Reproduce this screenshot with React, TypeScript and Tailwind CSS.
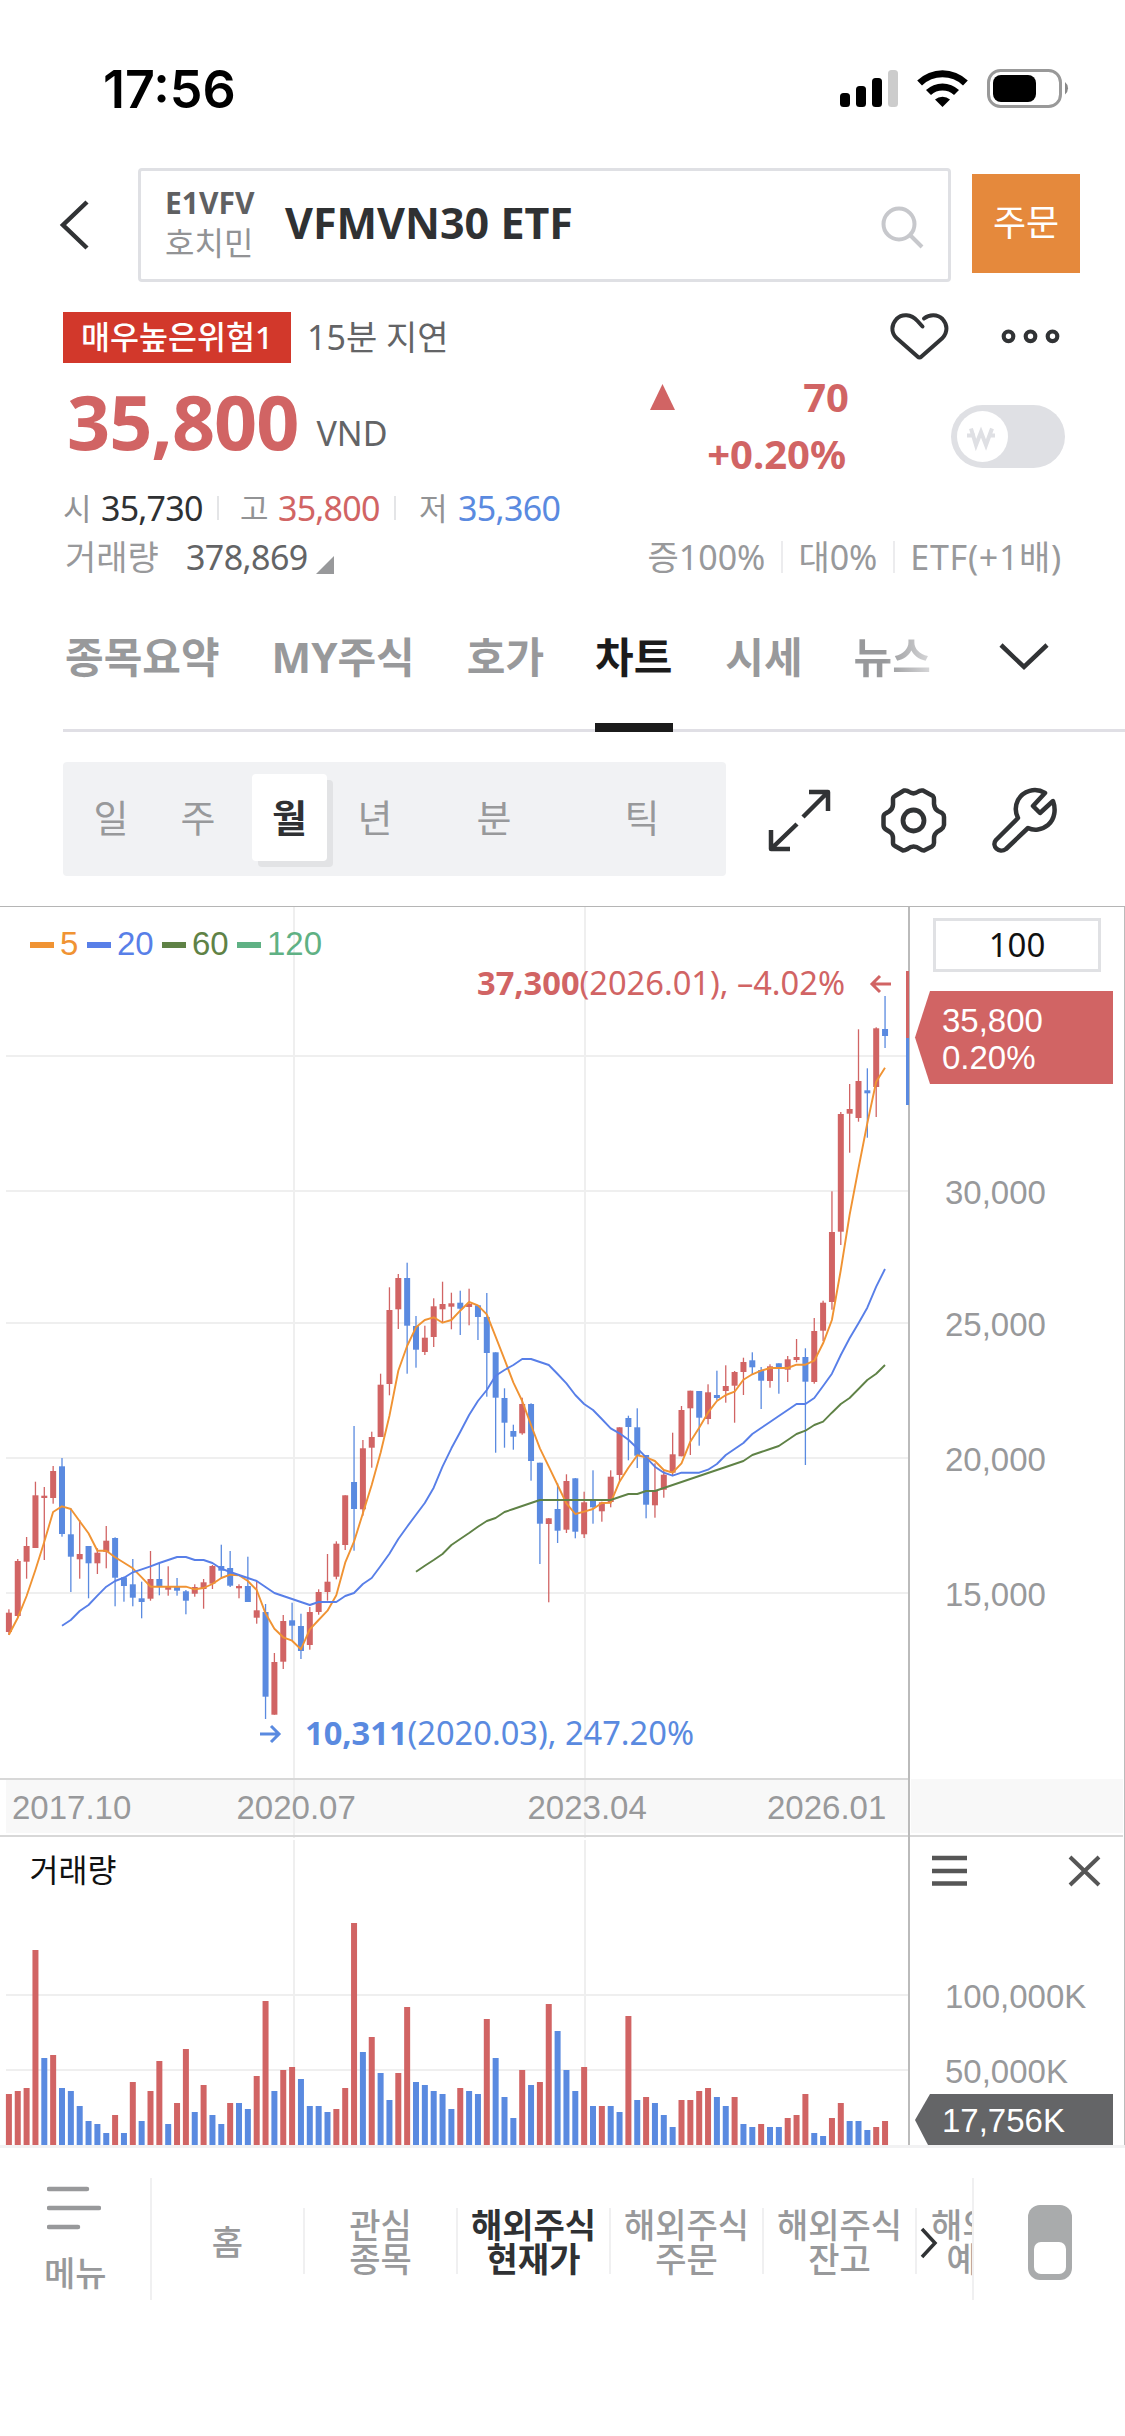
import React, { useState } from 'react';

const UP = '#d16464';
const DOWN = '#5a8ae0';
const CHART_FONT = '"Liberation Sans", Arial, sans-serif';
const TEXT_FONT = '"Noto Sans", "Noto Sans CJK KR", sans-serif';

// [direction, high, body top, body bottom, low, volume]
type Candle = [string, number, number, number, number, number];

const CANDLES: Candle[] = [
  ['u', 702.3, 705.7, 725, 728, 51], ['u', 652, 654, 709, 711, 54],
  ['u', 630, 639, 654.7, 671.7, 57], ['u', 574.7, 588.3, 641, 641, 195],
  ['u', 580, 588.7, 591, 653, 87], ['u', 559, 564, 591, 596.7, 90],
  ['d', 551, 559.3, 627, 629.7, 57], ['d', 601.3, 627.3, 649.7, 685, 54],
  ['u', 613, 647, 652.3, 671.7, 39], ['d', 639, 639, 656.3, 691.3, 24],
  ['u', 641.3, 645.7, 656.3, 667, 21], ['u', 619, 633.7, 645, 661.3, 12],
  ['d', 630.3, 631, 670.7, 699.3, 30], ['d', 669.7, 670.3, 679, 694.7, 12],
  ['d', 652, 677.3, 690.7, 699.3, 63], ['d', 674.7, 691.3, 695, 711.3, 24],
  ['u', 644, 672, 691.7, 693.7, 54], ['d', 656, 672, 679.7, 688.3, 84],
  ['u', 659.3, 679.7, 682.7, 688.7, 21], ['d', 671, 679.7, 683.7, 688.7, 42],
  ['d', 683, 684.3, 693.7, 707.3, 96], ['u', 677.3, 680, 686.7, 689.7, 33],
  ['u', 672, 675.3, 682, 701.7, 60], ['u', 658, 659, 676.7, 682, 30],
  ['d', 637.7, 659, 663.7, 671.7, 21], ['d', 644, 661, 678.7, 680, 42],
  ['u', 677.3, 679, 681.3, 691.3, 42], ['d', 649.7, 679, 695, 695, 36],
  ['u', 674, 703.3, 710.7, 716.7, 69], ['d', 697, 705, 789.7, 812, 144],
  ['u', 746, 755, 807.7, 807.7, 54], ['u', 708, 714, 754.7, 762, 75],
  ['d', 695.7, 713.3, 718.7, 733, 78], ['d', 706.7, 719, 744, 752, 66],
  ['u', 700, 705, 738, 742.7, 39], ['u', 682.3, 685, 705, 707.7, 39],
  ['u', 647, 674.7, 685, 693.7, 33], ['u', 634.3, 636.7, 669.7, 672.3, 36],
  ['u', 588.3, 588.3, 638, 643, 57], ['d', 519, 575, 602, 643.7, 222],
  ['u', 533, 541.3, 602.3, 608.7, 93], ['u', 524.7, 530, 540.7, 560.7, 108],
  ['u', 466.7, 477.7, 530, 530, 72], ['u', 380.3, 403, 477, 488.3, 45],
  ['u', 367, 371, 402.3, 422, 72], ['d', 355.7, 371, 418.7, 466.7, 138],
  ['d', 409, 419, 442.7, 460.7, 63], ['u', 418.7, 430.7, 445, 448, 60],
  ['u', 391.3, 399.3, 430, 440, 54], ['u', 374.7, 397, 402.3, 415.7, 51],
  ['u', 385.7, 396.3, 399.7, 422.3, 36], ['d', 383.7, 395.7, 401.7, 428, 57],
  ['u', 381.7, 397, 400, 418.3, 54], ['d', 398.3, 398.3, 410, 433, 51],
  ['d', 386, 410, 446, 489.7, 126], ['d', 445.3, 445.3, 490.7, 545.7, 87],
  ['d', 481.3, 491, 515.7, 540.7, 48], ['d', 517.7, 524, 529.7, 542.7, 27],
  ['u', 490.7, 497, 526.3, 527.7, 75], ['d', 496.3, 497, 554, 573.7, 60],
  ['d', 555.7, 555.7, 616.7, 657, 63], ['u', 611, 611.3, 617, 695.3, 141],
  ['d', 576.3, 602, 623.7, 636, 114], ['u', 567.3, 574, 622.7, 626, 75],
  ['d', 571, 571.3, 624.7, 631.3, 54], ['u', 584.7, 595.3, 627.3, 631, 78],
  ['d', 563.3, 593, 600.3, 616.7, 39], ['u', 594.7, 595.3, 604.3, 614.7, 39],
  ['u', 563.3, 569.7, 595, 600.3, 39], ['u', 520.3, 520.3, 568, 574.7, 33],
  ['d', 508.7, 511, 520, 553.3, 129], ['d', 501.3, 520.3, 548.7, 561, 45],
  ['d', 548, 548, 597.7, 611.3, 48], ['u', 556.3, 583, 598.3, 610.7, 42],
  ['u', 563, 567.7, 582.7, 590.7, 30], ['u', 525.7, 547.3, 565.7, 568, 18],
  ['u', 499, 503, 549.3, 549.3, 45], ['u', 483.7, 483.7, 501.3, 548, 45],
  ['d', 484, 484, 510.7, 538.7, 54], ['u', 477.3, 485.3, 512, 517.3, 57],
  ['d', 463.7, 488, 491, 493, 48], ['u', 458.3, 479, 484, 495.7, 39],
  ['u', 464, 465, 478.7, 515.7, 48], ['u', 450.7, 455, 465, 488, 21],
  ['d', 445.3, 453.3, 460.3, 468, 18], ['d', 460, 463, 473.7, 502, 21],
  ['u', 457.3, 459.3, 474, 480.7, 18], ['d', 456.3, 456.3, 461.7, 486.7, 18],
  ['u', 449, 452.3, 462.7, 475, 27], ['u', 432, 450, 453, 455.3, 30],
  ['d', 441.3, 450, 474.7, 558, 51], ['u', 411, 424, 475, 476.7, 12],
  ['u', 393.7, 395.7, 423.7, 434, 9], ['u', 284.3, 325, 395, 402.7, 27],
  ['u', 205, 207, 324.7, 338, 42], ['u', 177, 202, 206.7, 245.7, 24],
  ['u', 122.3, 174, 211, 214.7, 24], ['d', 161.3, 183.3, 186.3, 230.7, 15],
  ['u', 120.3, 121.3, 180, 210, 18], ['d', 89, 122, 129, 141, 24],
];

// Direction of each volume bar against the previous month, one row per ten bars
const VOLUME_DIRS = [
  'uuuududddd',
  'ddududuudu',
  'ududdudduu',
  'duudddduuu',
  'dudduudddd',
  'duddudddud',
  'uudddududd',
  'ududdduuuu',
  'dduddudduu',
  'udduudddu' + 'u',
].join('');

const MA5 = [
  727.7, 710.7, 689, 663, 634.7, 605, 599.3, 602, 614.3, 626.3, 643.7, 643.7, 650.3, 655.7, 661.3, 670.3, 679.7,
  679.7, 679.7, 679.7, 679.7, 682.3, 681, 677, 671, 667.7, 668.3, 674, 683, 706.3, 721.7, 730.3, 733.7, 742.3,
  722.3, 713, 703.7, 688.3, 655.7, 634.7, 606.3, 578, 545.7, 509, 463.7, 439, 420.3, 413, 410.3, 415.7, 413,
  403.7, 395, 398.3, 407.3, 429.7, 452.3, 475.7, 494, 518, 541.3, 559.7, 578, 596.3, 607, 604.7, 602, 596,
  595.7, 574.7, 560.7, 548.3, 550.3, 554, 563, 565.7, 556.3, 534.7, 520.7, 505.7, 494, 488, 484.7, 472.7,
  467.3, 463.7, 461, 461, 461, 457.7, 457.7, 453.7, 436.3, 413, 363, 308, 261.3, 216.3, 174.7, 160.7,
];

const MA20 = [
  718.7, 713, 704, 698, 688.7, 679.7, 674, 670.7, 665.3, 662.3, 659.3, 656, 653, 650, 650, 653, 653, 656, 661.7,
  665, 668, 671, 674, 680, 686, 689, 692, 695, 698, 695, 695, 695, 689, 686, 677, 671, 659, 646.7, 632, 619.7,
  607.7, 596, 580.7, 559.7, 541.3, 525, 508, 494, 483, 468.7, 463, 458, 452, 452, 455, 458, 467, 476.3, 488,
  497, 503, 512, 521.3, 526.3, 532.7, 541.3, 550.3, 559.7, 565.7, 568.7, 565.7, 565.7, 565.7, 562.7, 557, 548,
  542, 536, 527, 521, 515, 509, 503, 497, 497, 491, 479, 466.7, 448, 431.3, 416.3, 400.7, 379.7, 362,
];

const MA60 = [
  664.7, 658.7, 653, 647, 638, 632, 626, 619.7, 614, 611, 605, 602, 599, 596, 593, 593, 593, 593, 593, 593, 593,
  593, 593, 590, 587, 587, 584, 584, 581, 578, 575, 572, 569, 566, 563, 560, 557, 554, 548, 545, 542, 539, 533,
  527, 523.7, 518, 514.7, 505.7, 497, 491, 482, 473, 466.7, 458,
];

const TABS = [
  { label: '종목요약', left: 'ml-[2px]' },
  { label: 'MY주식', left: 'ml-[52px]' },
  { label: '호가', left: 'ml-[52px]' },
  { label: '차트', left: 'ml-[51px]' },
  { label: '시세', left: 'ml-[53px]' },
  { label: '뉴스', left: 'ml-[51px]' },
];

const PERIODS = [
  { label: '일', width: 'w-[96px]' },
  { label: '주', width: 'w-[78px]' },
  { label: '월', width: 'w-[75px]' },
  { label: '년', width: 'w-[96px]' },
  { label: '분', width: 'w-[142px]' },
  { label: '틱', width: 'w-[154px]' },
];

const NAV_ITEMS = ['홈', '관심\n종목', '해외주식\n현재가', '해외주식\n주문', '해외주식\n잔고', '해외주식\n예수금'];

const candleX = (i: number) => 8.9 + i * 8.85;

const toPoints = (values: number[]) => {
  const start = CANDLES.length - values.length;
  return values.map((v, i) => `${candleX(start + i).toFixed(1)},${v}`).join(' ');
};

const StatusBar = () => (
  <div className="flex h-[168px] items-start justify-between pl-[103px] pr-[56px]">
    <span className="mt-[59px] font-[Inter] text-[52px] leading-[62px] font-semibold text-black">17:56</span>
    <svg className="mt-[66px]" width="232" height="46" viewBox="837 66 232 46">
      <rect x="840" y="93" width="10" height="14" rx="3.5" />
      <rect x="856" y="86" width="10" height="21" rx="3.5" />
      <rect x="872" y="78" width="10" height="29" rx="3.5" />
      <rect x="888" y="70" width="10" height="37" rx="3.5" fill="#ccc" />
      <path d="M917.2 80.5 A36.5 36.5 0 0 1 967.8 80.5 L963 85.5 A29.5 29.5 0 0 0 922 85.5 Z" />
      <path d="M926 90 A24 24 0 0 1 959 90 L954 95 A17 17 0 0 0 931 95 Z" />
      <path d="M935 99.5 A11.5 11.5 0 0 1 950 99.5 L942.5 107 Z" />
      <rect x="988.5" y="70.5" width="72" height="36" rx="12" fill="none" stroke="#999" strokeWidth="3" />
      <rect x="993" y="75" width="43" height="27" rx="8" />
      <path d="M1065 82 A8 8 0 0 1 1065 94.5 Z" fill="#888" />
    </svg>
  </div>
);

const SearchHeader = () => (
  <header className="flex h-[114px] items-center">
    <svg className="ml-[58px]" width="34" height="56" viewBox="0 0 34 56" fill="none" stroke="#313335" strokeWidth="4.5">
      <path d="M29 5 L5 28 L29 51" />
    </svg>
    <div className="ml-[46px] flex h-[114px] w-[813px] items-center rounded-[4px] border-[3px] border-[#dfe0e4] pl-[24px] pr-[24px]">
      <div className="mb-[4px] flex w-[120px] flex-col">
        <span className="text-[30px] leading-[40px] font-bold text-[#5f6062]">E1VFV</span>
        <span className="text-[32px] leading-[40px] text-[#929395]">호치민</span>
      </div>
      <span className="mb-[4px] flex-1 text-[43px] leading-[60px] font-bold text-[#2f3133]">VFMVN30 ETF</span>
      <svg className="mt-1" width="44" height="44" viewBox="0 0 44 44" fill="none" stroke="#c7c8cc" strokeWidth="4">
        <circle cx="19" cy="19" r="15.5" />
        <path d="M30 30 L42 42" />
      </svg>
    </div>
    <button className="mb-[3px] ml-[21px] h-[99px] w-[108px] bg-[#e5893c] pb-[2px] text-[36px] text-white">주문</button>
  </header>
);

const QuoteSummary = () => (
  <section className="h-[317px]">
    <div className="flex h-[111px] items-center pl-[63px]">
      <span className="flex h-[51px] w-[228px] items-center justify-center bg-[#d2382b] pb-px text-[31.5px] font-medium text-white">
        매우높은위험1
      </span>
      <span className="ml-[16px] text-[34px] text-[#636466]">15분 지연</span>
      <svg className="mb-px ml-auto mr-[55px]" width="182" height="54" viewBox="888 310 182 54" fill="none" stroke="#313335">
        <path
          d="M922.5 326.5 L917.5 321 C911 314 902 313.5 896.5 319 C891.5 324.5 890.5 332 896.5 338 L917.5 356.5 Q919.5 358.5 921.5 356.5 L942.5 338 C948 332 947.5 324.5 942.5 319 C937.5 314 929.5 314 924 318.5"
          strokeWidth="4"
          strokeLinecap="round"
          strokeLinejoin="round"
        />
        <circle cx="1008.5" cy="336.3" r="4.8" strokeWidth="4.2" />
        <circle cx="1030.5" cy="336.3" r="4.8" strokeWidth="4.2" />
        <circle cx="1052.5" cy="336.3" r="4.8" strokeWidth="4.2" />
      </svg>
    </div>
    <div className="flex h-[90px] pl-[67px] pr-[60px]">
      <span className="-mt-[8px] text-[75.5px] leading-[72px] font-bold tracking-[-1px] text-[#d16464]">35,800</span>
      <span className="mt-[18px] ml-[18px] text-[34px] leading-[44px] text-[#636466]">VND</span>
      <div className="-mt-[25px] ml-auto flex w-[199px] flex-col text-[40px] leading-[57px] font-bold text-[#d16464]">
        <div className="flex items-center justify-between">
          <svg width="25" height="26" viewBox="0 0 25 26" fill="currentColor">
            <path d="M12.5 0 L25 26 H0 Z" />
          </svg>
          <span>70</span>
        </div>
        <span className="mr-[3px] self-end">+0.20%</span>
      </div>
      <svg className="mt-[11px] ml-[102px]" width="114" height="65" viewBox="0 0 114 65">
        <rect y="1" width="114" height="63" rx="31.5" fill="#dfe0e4" />
        <circle cx="31.5" cy="32.5" r="25.5" fill="#fff" />
        <path d="M20 24.5 L25 41 L30 28 L35 41 L41 24.5 M16 31.5 H24 M37 31.5 H44" fill="none" stroke="#dfe0e4" strokeWidth="4" />
      </svg>
    </div>
    <div className="flex h-[50px] items-center pl-[63px] text-[34px]">
      <span className="w-[38px] text-[31px] text-[#929395]">시</span>
      <span className="w-[116px] tracking-[-0.8px] text-[#2f3133]">35,730</span>
      <span className="h-[24px] w-[2px] bg-[#e4e5e7]" />
      <span className="ml-[21px] w-[38px] text-[31px] text-[#929395]">고</span>
      <span className="w-[116px] tracking-[-0.8px] text-[#d16464]">35,800</span>
      <span className="h-[24px] w-[2px] bg-[#e4e5e7]" />
      <span className="ml-[23px] w-[39px] text-[31px] text-[#929395]">저</span>
      <span className="tracking-[-0.7px] text-[#5a8ae0]">35,360</span>
    </div>
    <div className="flex h-[48px] items-center pl-[65px] pr-[63px] text-[34px] text-[#98999b]">
      <span className="w-[121px]">거래량</span>
      <span className="tracking-[-0.6px] text-[#636466]">378,869</span>
      <svg className="mt-4 ml-[8px]" width="18" height="18" viewBox="0 0 18 18" fill="#98999b">
        <path d="M18 0 V18 H0 Z" />
      </svg>
      <div className="ml-auto flex items-center gap-[15.5px]">
        <span>증100%</span>
        <span className="h-[32px] w-[2px] bg-[#ececee]" />
        <span>대0%</span>
        <span className="h-[32px] w-[2px] bg-[#ececee]" />
        <span className="tracking-[0.7px]">ETF(+1배)</span>
      </div>
    </div>
  </section>
);

const TabBar: React.FC<{ active: string; onChange: (tab: string) => void }> = ({ active, onChange }) => (
  <nav className="ml-[63px] flex h-[133px] border-b-[3px] border-[#e0dfe5]">
    {TABS.map(({ label, left }) => (
      <button
        key={label}
        onClick={() => onChange(label)}
        className={`${left} relative flex shrink-0 pt-[26px] text-[42px] leading-[64px] font-bold whitespace-nowrap ${active === label ? 'text-[#1b1b1b]' : 'text-[#98999b]'}`}
      >
        {label === '뉴스' ? (
          <span className="bg-linear-to-r from-[#98999b] from-40% to-[#d8d8da] bg-clip-text text-transparent">{label}</span>
        ) : (
          label
        )}
        {active === label && <span className="absolute -bottom-[3px] left-0 h-[9px] w-[78px] bg-[#1b1b1b]" />}
      </button>
    ))}
    <svg className="mt-[39px] mr-[75px] ml-auto" width="52" height="34" viewBox="0 0 52 34" fill="none" stroke="#313335" strokeWidth="4.5">
      <path d="M3 7 L26 29 L49 7" />
    </svg>
  </nav>
);

const Toolbar: React.FC<{ period: string; onChange: (period: string) => void }> = ({ period, onChange }) => (
  <div className="flex h-[174px] items-start pt-[30px] pl-[63px]">
    <div className="flex h-[114px] w-[663px] items-center rounded-[4px] bg-[#f1f2f4]">
      {PERIODS.map(({ label, width }) => (
        <button
          key={label}
          onClick={() => onChange(label)}
          className={`${width} flex h-[87px] shrink-0 items-center justify-center text-[38px] ${
            period === label
              ? '-mt-[3px] ml-[15px] rounded-[4px] bg-white font-bold text-[#2f3133] shadow-[6px_6px_0_#e2e3e5]'
              : 'pb-1 text-[#98999b]'
          }`}
        >
          {label}
        </button>
      ))}
    </div>
    <svg className="ml-[39px]" width="300" height="114" viewBox="765 762 300 114" fill="none" stroke="#313335" strokeWidth="4.5" strokeLinejoin="round">
      <path d="M803 817 L828 792 M809 792 H828 V811 M797 824 L771 849 M771 830 V849 H790" />
      <path d="M904 790.5 Q907 790 909 791.7 Q913.5 795 918 791.7 Q920 790 923 790.5 L933 796 Q934 797 934 800 V804 Q934.5 809 938 811 L942 813 Q944 814.5 944 817 V825 Q943.5 828 941 829.5 L937 832 Q934 834.5 934 838 V843 Q934 845 932 846.5 L924 850.5 Q922 850.5 920 849 Q913.5 844 907.500 849 Q905 850.5 903 850.5 L895 846 Q893 845 893 843 V838 Q893 834 890 832 L886 829.5 Q883.5 828 883.5 825 V817 Q883.5 814.5 885.5 813.5 L889 811.5 Q893 809 893 804.5 V799 Q893 797 895 796 Z" />
      <circle cx="913.5" cy="820.5" r="10.5" strokeWidth="4.8" />
      <path d="M1045 793 C1035 787 1023 791 1018 800 C1015 806 1015 812 1018 818 L996 840 C991 846 999 854 1006 849 L1028 828 C1034 831 1042 830 1048 825 C1055 819 1056 809 1053 801 L1040 813 L1033 806 Z" />
    </svg>
  </div>
);

const LEGEND = [
  { period: '5', color: '#f09333', dash: 30, text: 60 },
  { period: '20', color: '#587fe8', dash: 87, text: 117 },
  { period: '60', color: '#5f8246', dash: 162, text: 192 },
  { period: '120', color: '#5fb184', dash: 237, text: 267 },
];

const PriceChart = () => (
  <svg className="block" width="1125" height="933" viewBox="0 0 1125 933" fontFamily={CHART_FONT} fontSize="33">
    <path d="M294 0 V931 M585 0 V931" stroke="#efefef" strokeWidth="2" />
    {[149, 284, 416, 551, 686].map((y) => (
      <rect key={y} x="6" y={y - 1} width="902" height="2" fill="#efefef" />
    ))}
    {/* Date band */}
    <rect x="6" y="872" width="902" height="54" fill="#f8f8f8" />
    <rect x="911" y="872" width="212" height="54" fill="#f8f8f8" />
    <path d="M294 872 V926 M585 872 V926" stroke="#efefef" strokeWidth="2" />
    <path d="M0 872 H908 M0 929 H1123" stroke="#d8d8d8" strokeWidth="2" />
    <g fill="#98999b">
      <text x="12" y="912">2017.10</text>
      <text x="236.5" y="912">2020.07</text>
      <text x="527.5" y="912">2023.04</text>
      <text x="767" y="912">2026.01</text>
    </g>

    {CANDLES.map(([dir, high, top, bottom, low], i) => {
      const color = dir === 'u' ? UP : DOWN;
      return (
        <g key={i} fill={color}>
          <rect x={candleX(i) - 0.65} y={high} width="1.3" height={low - high} />
          <rect x={candleX(i) - 3} y={top} width="6" height={bottom - top} />
        </g>
      );
    })}
    <g fill="none" strokeWidth="1.9" strokeLinejoin="round">
      <polyline points={toPoints(MA5)} stroke="#f09333" />
      <polyline points={toPoints(MA60)} stroke="#5f8246" />
      <polyline points={toPoints(MA20)} stroke="#587fe8" />
    </g>

    {LEGEND.map(({ period, color, dash, text }) => (
      <g key={period} fill={color}>
        <rect x={dash} y="35" width="24" height="6" />
        <text x={text} y="48">{period}</text>
      </g>
    ))}

    {/* Highest and lowest price notes */}
    <g fontFamily={TEXT_FONT} fontSize="33">
      <text x="845" y="87.5" textAnchor="end" fill={UP} textLength="368" lengthAdjust="spacingAndGlyphs">
        <tspan fontWeight="700">37,300</tspan>(2026.01), –4.02%
      </text>
      <path d="M891 77 H872 M880 69 L872 77 L880 85" fill="none" stroke={UP} strokeWidth="3" />
      <text x="305" y="838" fill={DOWN} textLength="389" lengthAdjust="spacingAndGlyphs">
        <tspan fontWeight="700">10,311</tspan>(2020.03), 247.20%
      </text>
      <path d="M260 827 H279 M271 819 L279 827 L271 835" fill="none" stroke={DOWN} strokeWidth="3" />
    </g>

    <rect x="908" y="0" width="2" height="933" fill="#bbb" />
    <rect x="1124" y="0" width="1" height="933" fill="#bbb" />
    <rect x="906" y="64" width="3" height="67" fill={UP} />
    <rect x="906" y="131" width="3" height="67" fill={DOWN} />

    {/* Price axis */}
    <rect x="934.5" y="12.5" width="165" height="51" fill="#fff" stroke="#e0e1e4" strokeWidth="3" />
    <text x="1017" y="50" textAnchor="middle" fontFamily={TEXT_FONT} fill="#111">100</text>
    <path d="M915 130.5 L930 84 H1113 V177 H930 Z" fill={UP} />
    <g fill="#fff">
      <text x="942" y="125">35,800</text>
      <text x="942" y="162">0.20%</text>
    </g>
    <g fill="#98999b">
      <text x="945" y="297">30,000</text>
      <text x="945" y="429">25,000</text>
      <text x="945" y="564">20,000</text>
      <text x="945" y="699">15,000</text>
    </g>
  </svg>
);

const VolumeChart = () => (
  <svg className="block" width="1125" height="305" viewBox="0 0 1125 305" fontFamily={CHART_FONT} fontSize="33">
    <path d="M294 0 V305 M585 0 V305 M6 155 H908 M6 230 H908" stroke="#efefef" strokeWidth="2" />
    <text x="29.5" y="42" fontFamily={TEXT_FONT} fontSize="31.5" fill="#111">거래량</text>
    {CANDLES.map((candle, i) => (
      <rect
        key={i}
        x={candleX(i) - 3}
        y={305 - candle[5]}
        width="6"
        height={candle[5]}
        fill={VOLUME_DIRS[i] === 'u' ? UP : DOWN}
      />
    ))}
    <rect x="908" y="0" width="2" height="305" fill="#bbb" />
    <rect x="1124" y="0" width="1" height="305" fill="#bbb" />
    <path d="M932 18 H967 M932 31 H967 M932 43.5 H967" stroke="#565656" strokeWidth="4.5" />
    <path d="M1070 17 L1099 45 M1099 17 L1070 45" stroke="#565656" strokeWidth="4" />
    <g fill="#98999b">
      <text x="945" y="168">100,000K</text>
      <text x="945" y="243">50,000K</text>
    </g>
    <path d="M915 280 L930 254 H1113 V305 H928 Z" fill="#646567" />
    <text x="942" y="292" fill="#fff">17,756K</text>
  </svg>
);

const BottomNav = () => (
  <footer className="flex h-[288px] border-t-[3px] border-[#f2f2f3] pt-[30px]">
    <div className="flex h-[122px] w-[152px] flex-col border-r-2 border-[#f0f0f1] pl-[44px]">
      <svg className="ml-[3px] mt-[8px]" width="54" height="44" viewBox="0 0 54 44" stroke="#98999b" strokeWidth="4.5" strokeLinecap="round">
        <path d="M2 3 H40 M2 22 H52 M2 41 H31" />
      </svg>
      <span className="mt-[23px] text-[34px] leading-[40px] font-medium text-[#98999b]">메뉴</span>
    </div>
    <div className="relative h-[122px] w-[822px] border-r-2 border-[#f0f0f1]">
      <div className="flex h-[122px] overflow-hidden pt-[30px]">
        {NAV_ITEMS.map((label, i) => (
          <div
            key={label}
            className={`flex h-[66px] w-[153px] shrink-0 items-center justify-center pt-[2px] text-center text-[34px] leading-[34px] whitespace-pre ${
              i < 5 ? 'border-r-2 border-[#f0f0f1]' : ''
            } ${i === 2 ? 'font-bold text-[#2f3133]' : 'font-medium text-[#98999b]'}`}
          >
            {label}
          </div>
        ))}
      </div>
      <svg className="absolute top-[49px] left-[768px]" width="18" height="32" viewBox="0 0 18 32" fill="none" stroke="#313335" strokeWidth="3.5">
        <path d="M2 2 L15 16 L2 30" />
      </svg>
    </div>
    <svg className="mt-[27px] ml-[54px]" width="44" height="75" viewBox="0 0 44 75">
      <rect width="44" height="75" rx="12" fill="#a9abac" />
      <rect x="6" y="37" width="32" height="32" rx="7" fill="#fff" />
    </svg>
  </footer>
);

const App: React.FC = () => {
  const [tab, setTab] = useState('차트');
  const [period, setPeriod] = useState('월');

  return (
    <main className="flex h-[2436px] w-[1125px] flex-col overflow-hidden bg-white font-['Noto_Sans','Noto_Sans_CJK_KR',sans-serif]">
      <StatusBar />
      <SearchHeader />
      <QuoteSummary />
      <TabBar active={tab} onChange={setTab} />
      <Toolbar period={period} onChange={setPeriod} />
      <section className="border-t border-[#b5b5b5]">
        <PriceChart />
        <VolumeChart />
      </section>
      <BottomNav />
    </main>
  );
};

export default App;
